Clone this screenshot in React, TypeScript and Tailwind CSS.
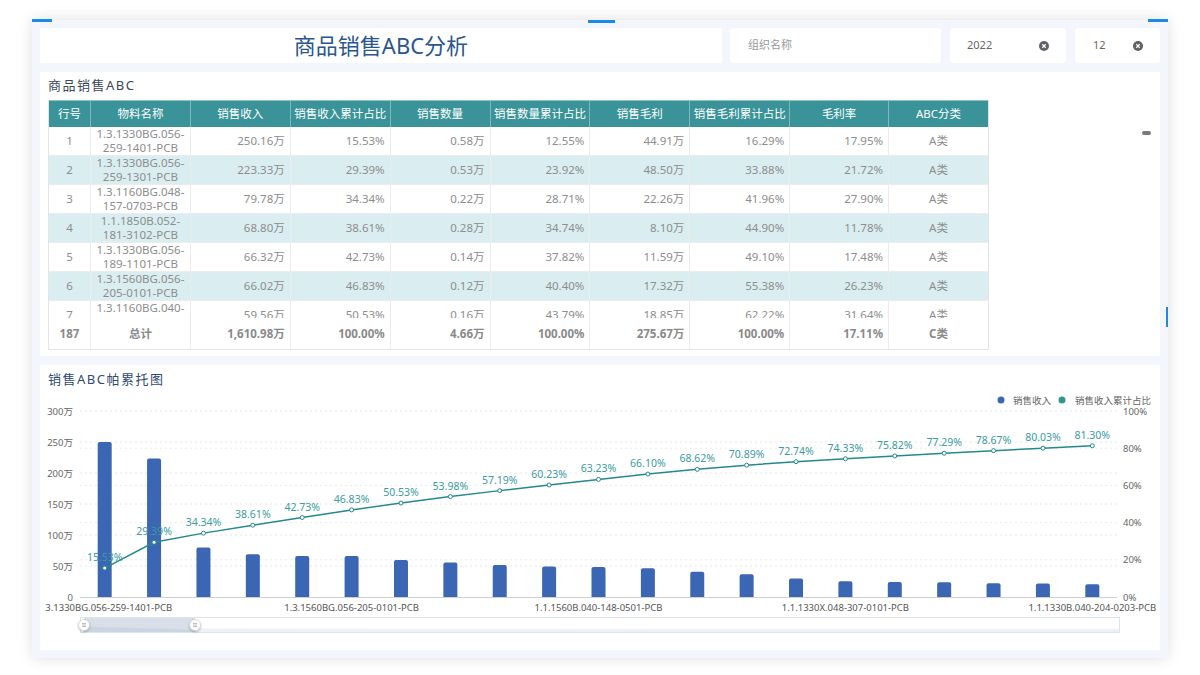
import React from "react";

const FONT = '"Noto Sans", "Noto Sans CJK SC", sans-serif';

type Row = (string | number)[];
const rows: Row[] = [
  [1, "1.3.1330BG.056-", "259-1401-PCB", "250.16万", "15.53%", "0.58万", "12.55%", "44.91万", "16.29%", "17.95%", "A类"],
  [2, "1.3.1330BG.056-", "259-1301-PCB", "223.33万", "29.39%", "0.53万", "23.92%", "48.50万", "33.88%", "21.72%", "A类"],
  [3, "1.3.1160BG.048-", "157-0703-PCB", "79.78万", "34.34%", "0.22万", "28.71%", "22.26万", "41.96%", "27.90%", "A类"],
  [4, "1.1.1850B.052-", "181-3102-PCB", "68.80万", "38.61%", "0.28万", "34.74%", "8.10万", "44.90%", "11.78%", "A类"],
  [5, "1.3.1330BG.056-", "189-1101-PCB", "66.32万", "42.73%", "0.14万", "37.82%", "11.59万", "49.10%", "17.48%", "A类"],
  [6, "1.3.1560BG.056-", "205-0101-PCB", "66.02万", "46.83%", "0.12万", "40.40%", "17.32万", "55.38%", "26.23%", "A类"],
  [7, "1.3.1160BG.040-", "146-0301-PCB", "59.56万", "50.53%", "0.16万", "43.79%", "18.85万", "62.22%", "31.64%", "A类"],
];
const totals = ["187", "总计", "1,610.98万", "100.00%", "4.66万", "100.00%", "275.67万", "100.00%", "17.11%", "C类"];
const headers = ["行号", "物料名称", "销售收入", "销售收入累计占比", "销售数量", "销售数量累计占比", "销售毛利", "销售毛利累计占比", "毛利率", "ABC分类"];
const widths = [42, 100, 100, 100, 100, 100, 100, 100, 99, 99];

const values = [250.16, 223.33, 79.78, 68.8, 66.32, 66.02, 59.56, 55.6, 51.7, 49.0, 48.3, 46.2, 40.6, 36.6, 29.8, 25.6, 24.0, 23.7, 22.2, 21.9, 20.5];
const pcts = [15.53, 29.39, 34.34, 38.61, 42.73, 46.83, 50.53, 53.98, 57.19, 60.23, 63.23, 66.1, 68.62, 70.89, 72.74, 74.33, 75.82, 77.29, 78.67, 80.03, 81.3];
const xlabels: Record<number, string> = {
  0: "1.3.1330BG.056-259-1401-PCB",
  5: "1.3.1560BG.056-205-0101-PCB",
  10: "1.1.1560B.040-148-0501-PCB",
  15: "1.1.1330X.048-307-0101-PCB",
  20: "1.1.1330B.040-204-0203-PCB",
};

function ClearIcon() {
  return (
    <svg width="10" height="10" viewBox="0 0 10 10">
      <circle cx="5" cy="5" r="5" fill="#5f6266" />
      <path d="M3.3 3.3 L6.7 6.7 M6.7 3.3 L3.3 6.7" stroke="#fff" strokeWidth="1.3" />
    </svg>
  );
}

function Table() {
  return (
    <div className="ml-2 w-[941px] border-l border-r border-b border-[#e4e4e4]" style={{ fontFamily: FONT }}>
      <div className="flex h-[27px] bg-[#3a9399] border-t border-[#8fc3c6]">
        {headers.map((h, i) => (
          <div
            key={i}
            className="flex items-center justify-center text-[11.5px] text-white border-r border-[#7fb9bd] last:border-r-0"
            style={{ width: widths[i] }}
          >
            {h}
          </div>
        ))}
      </div>
      <div className="h-[191px] overflow-hidden">
        {rows.map((r, ri) => (
          <div key={ri} className={`flex h-[29px] ${ri % 2 === 1 ? "bg-[#daeef1]" : "bg-white"}`}>
            {widths.map((w, ci) => {
              let content: React.ReactNode;
              let align = "justify-end pr-[5px]";
              if (ci === 0) {
                content = r[0];
                align = "justify-center";
              } else if (ci === 1) {
                content = (
                  <div className="text-center leading-[14px]">
                    <div>{r[1]}</div>
                    <div>{r[2]}</div>
                  </div>
                );
                align = "justify-center";
              } else {
                content = r[ci + 1];
                if (ci === 9) align = "justify-center";
              }
              return (
                <div
                  key={ci}
                  className={`flex items-center ${align} text-[11.5px] text-[#8d8d8d] border-r border-b border-[#ececec] last:border-r-0`}
                  style={{ width: w }}
                >
                  {content}
                </div>
              );
            })}
          </div>
        ))}
      </div>
      <div className="flex h-[31px] bg-white">
        {totals.map((t, ci) => (
          <div
            key={ci}
            className={`flex items-center ${ci <= 1 || ci === 9 ? "justify-center" : "justify-end pr-[5px]"} text-[11.5px] font-bold text-[#8a8a8a] border-r border-[#ececec] last:border-r-0`}
            style={{ width: widths[ci] }}
          >
            {t}
          </div>
        ))}
      </div>
    </div>
  );
}

function Chart() {
  const left = 40;
  const right = 1077;
  const top = 16;
  const bottom = 202;
  const step = (right - left) / 21;
  const cx = (i: number) => left + step * (i + 0.5);
  const yv = (v: number) => bottom - (v / 300) * (bottom - top);
  const yp = (p: number) => bottom - (p / 100) * (bottom - top);
  const leftTicks = ["0", "50万", "100万", "150万", "200万", "250万", "300万"];
  const rightTicks = ["0%", "20%", "40%", "60%", "80%", "100%"];
  const linePts = pcts.map((p, i) => `${cx(i)},${yp(p)}`).join(" ");
  return (
    <svg width="1120" height="255" viewBox="0 0 1120 255" style={{ fontFamily: FONT }}>
      <defs>
        <clipPath id="clipx">
          <rect x="5" y="0" width="1112" height="255" />
        </clipPath>
        <filter id="hs" x="-50%" y="-50%" width="200%" height="200%">
          <feDropShadow dx="0" dy="1" stdDeviation="1" floodColor="#000" floodOpacity="0.3" />
        </filter>
      </defs>
      <circle cx="961" cy="5" r="3.5" fill="#3a66b3" />
      <text x="973" y="8.5" fontSize="9.5" fill="#666">销售收入</text>
      <circle cx="1022" cy="5" r="3.5" fill="#2e9599" />
      <text x="1035" y="8.5" fontSize="9.5" fill="#666">销售收入累计占比</text>
      {[0, 1, 2, 3, 4, 5].map((k) => {
        const y = top + ((bottom - top) / 6) * k;
        return <line key={k} x1={left} x2={right} y1={y} y2={y} stroke="#e6e6e6" strokeDasharray="2 3" />;
      })}
      {[1, 2, 3, 4].map((k) => {
        const y = top + ((bottom - top) / 5) * k;
        return <line key={"r" + k} x1={left} x2={right} y1={y} y2={y} stroke="#ececec" strokeDasharray="2 3" />;
      })}
      <line x1={left} x2={right} y1={bottom + 0.5} y2={bottom + 0.5} stroke="#cfcfcf" />
      {leftTicks.map((t, k) => (
        <text key={t} x="33" y={bottom - ((bottom - top) / 6) * k + 3.5} fontSize="9.5" fill="#666" textAnchor="end">
          {t}
        </text>
      ))}
      {rightTicks.map((t, k) => (
        <text key={t} x="1083" y={bottom - ((bottom - top) / 5) * k + 3.5} fontSize="9.5" fill="#666">
          {t}
        </text>
      ))}
      {values.map((v, i) => {
        const y = yv(v);
        const w = 14;
        const x = cx(i) - w / 2;
        return (
          <path
            key={i}
            d={`M${x},${bottom} L${x},${y + 2} Q${x},${y} ${x + 2},${y} L${x + w - 2},${y} Q${x + w},${y} ${x + w},${y + 2} L${x + w},${bottom} Z`}
            fill="#3a66b3"
          />
        );
      })}
      <polyline points={linePts} fill="none" stroke="#24888d" strokeWidth="1.5" />
      {pcts.map((p, i) => (
        <g key={i}>
          <circle cx={cx(i)} cy={yp(p)} r="2" fill="#fff" stroke="#24888d" strokeWidth="1" />
          <text x={cx(i)} y={yp(p) - 7} fontSize="10.5" fill="#3a9ba0" textAnchor="middle">
            {p.toFixed(2)}%
          </text>
        </g>
      ))}
      <g clipPath="url(#clipx)">
        {Object.entries(xlabels).map(([k, t]) => (
          <text key={k} x={cx(Number(k))} y={bottom + 14} fontSize="9.5" fill="#555" textAnchor="middle">
            {t}
          </text>
        ))}
      </g>
      <rect x="40.5" y="222.5" width="1039" height="15" fill="none" stroke="#dde3ea" />
      <path d="M44,233 L400,234 L1079,234 L1079,237 L44,237 Z" fill="#eef1f5" />
      <rect x="44" y="223" width="111" height="14" fill="#d4dce7" opacity="0.9" />
      <path d="M44,232 C80,232 120,234 155,235 L155,237 L44,237 Z" fill="#c3cedd" opacity="0.6" />
      {[44, 155].map((hx) => (
        <g key={hx} filter="url(#hs)">
          <circle cx={hx} cy="230" r="5.5" fill="#fff" stroke="#c8c8c8" strokeWidth="0.6" />
          <line x1={hx - 2} x2={hx + 2} y1="228.8" y2="228.8" stroke="#888" strokeWidth="0.8" />
          <line x1={hx - 2} x2={hx + 2} y1="231.2" y2="231.2" stroke="#888" strokeWidth="0.8" />
        </g>
      ))}
    </svg>
  );
}

export default function App() {
  return (
    <div className="w-[1200px] h-[675px] bg-white relative overflow-hidden" style={{ fontFamily: FONT }}>
      <div className="absolute left-[32px] top-[20px] w-[1136px] h-[638px] bg-[#f3f7fd] shadow-[0_0_14px_rgba(0,0,0,0.13)] p-2 flex flex-col gap-[9px]">
        <div className="flex h-[35px] shrink-0">
          <div className="w-[682px] bg-white flex items-center justify-center text-[22px] text-[#2b568d]">商品销售ABC分析</div>
          <div className="w-[211px] ml-2 bg-white rounded-[4px] flex items-center pl-[18px] text-[11px] text-[#999]">组织名称</div>
          <div className="w-[116px] ml-[9px] bg-white rounded-[4px] flex items-center pl-[17px] pr-[17px] justify-between text-[11px] text-[#666]">
            <span>2022</span>
            <ClearIcon />
          </div>
          <div className="w-[85px] ml-[9px] bg-white rounded-[4px] flex items-center pl-[18px] pr-[17px] justify-between text-[11px] text-[#666]">
            <span>12</span>
            <ClearIcon />
          </div>
        </div>
        <div className="h-[284px] shrink-0 bg-white relative">
          <div className="h-[28px] flex items-center pl-2 text-[13px] tracking-[1.5px] text-[#3a4658]">商品销售ABC</div>
          <Table />
          <div className="absolute left-[1102px] top-[59px] w-[9px] h-[4px] rounded-[2px] bg-[#7a7a7a]" />
        </div>
        <div className="h-[285px] shrink-0 bg-white flex flex-col">
          <div className="h-[30px] flex items-center pl-2 text-[13px] tracking-[1.5px] text-[#2f4a72]">销售ABC帕累托图</div>
          <Chart />
        </div>
      </div>
      <div className="absolute left-[32px] top-[19px] w-[20px] h-[3px] bg-[#1a8ce6]" />
      <div className="absolute left-[588px] top-[20px] w-[27px] h-[3px] bg-[#1a8ce6]" />
      <div className="absolute left-[1148px] top-[19px] w-[20px] h-[3px] bg-[#1a8ce6]" />
      <div className="absolute left-[1166px] top-[307px] w-[2px] h-[20px] bg-[#1a8ce6]" />
    </div>
  );
}
